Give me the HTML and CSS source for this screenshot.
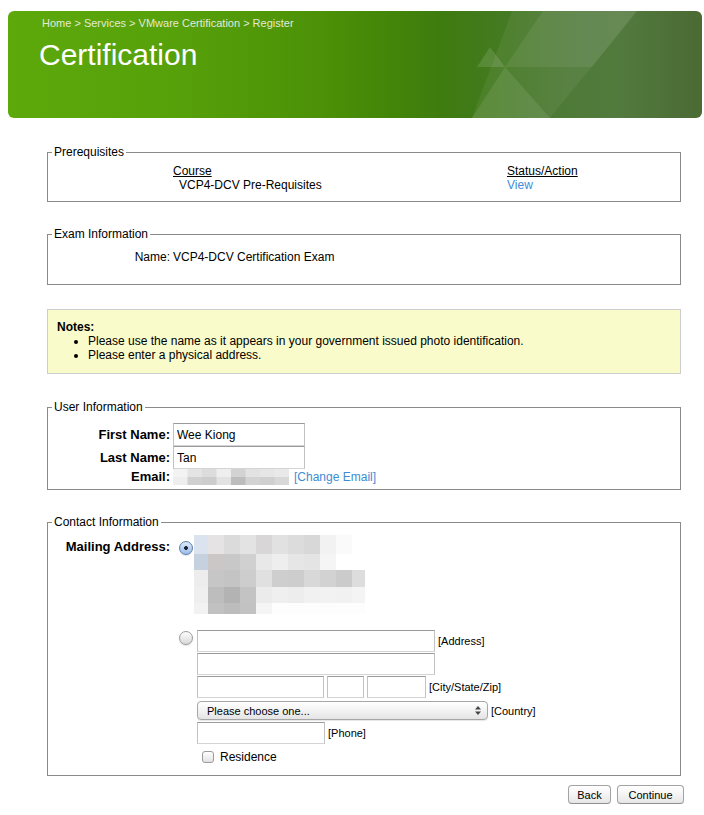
FILE: index.html
```html
<!DOCTYPE html>
<html lang="en">
<head>
    <meta charset="UTF-8">
    <meta name="viewport" content="width=device-width, initial-scale=1.0">
    <title>Certification - Register</title>
    <link rel="stylesheet" href="styles.css">
</head>
<body>

<div class="banner">
    <svg class="facets" width="694" height="107" viewBox="0 0 694 107">
        <polygon points="504,0 629,0 542,107 464,107" fill="#fff" fill-opacity="0.06"/>
        <polygon points="535,0 629,0 584,56 497,56" fill="#fff" fill-opacity="0.07"/>
        <polygon points="482,36 469,56 497,56" fill="#fff" fill-opacity="0.12"/>
        <polygon points="464,107 497,56 542,107" fill="#fff" fill-opacity="0.09"/>
    </svg>
    <div class="banner-text">
        <div class="crumbs">Home &gt; Services &gt; VMware Certification &gt; Register</div>
        <h1>Certification</h1>
    </div>
</div>

<div class="content">

    <fieldset class="box prereq">
        <legend>Prerequisites</legend>
        <div class="cols cols-3">
            <span></span><span class="th">Course</span><span class="th">Status/Action</span>
            <span></span><span class="course">VCP4-DCV Pre-Requisites</span><a href="#">View</a>
        </div>
    </fieldset>

    <fieldset class="box exam">
        <legend>Exam Information</legend>
        <div class="cols">
            <span class="plain-label">Name:</span><span>VCP4-DCV Certification Exam</span>
        </div>
    </fieldset>

    <div class="notes">
        <strong>Notes:</strong>
        <ul>
            <li>Please use the name as it appears in your government issued photo identification.</li>
            <li>Please enter a physical address.</li>
        </ul>
    </div>

    <fieldset class="box user">
        <legend>User Information</legend>
        <div class="cols user-rows">
            <label class="label" for="firstName">First Name:</label>
            <div><input class="text name" type="text" id="firstName" value="Wee Kiong"></div>

            <label class="label" for="lastName">Last Name:</label>
            <div><input class="text name" type="text" id="lastName" value="Tan"></div>

            <span class="label">Email:</span>
            <div class="email">
                <svg class="mosaic" width="116" height="16" viewBox="0 0 116 16">
                    <rect x="0" y="0" width="15" height="8" fill="#f3f3f3"/>
                    <rect x="14.5" y="0" width="15" height="8" fill="#e4e4e4"/>
                    <rect x="29" y="0" width="15" height="8" fill="#dcdcdc"/>
                    <rect x="43.5" y="0" width="15" height="8" fill="#eeeeee"/>
                    <rect x="58" y="0" width="15" height="8" fill="#d2d2d2"/>
                    <rect x="72.5" y="0" width="15" height="8" fill="#e2e2e2"/>
                    <rect x="87" y="0" width="15" height="8" fill="#e6e6e6"/>
                    <rect x="101.5" y="0" width="14.5" height="8" fill="#e9e9e9"/>
                    <rect x="0" y="8" width="15" height="8" fill="#eeeeee"/>
                    <rect x="14.5" y="8" width="15" height="8" fill="#d0d0d0"/>
                    <rect x="29" y="8" width="15" height="8" fill="#cdcdcd"/>
                    <rect x="43.5" y="8" width="15" height="8" fill="#e2e2e2"/>
                    <rect x="58" y="8" width="15" height="8" fill="#bdbdbd"/>
                    <rect x="72.5" y="8" width="15" height="8" fill="#d3d3d3"/>
                    <rect x="87" y="8" width="15" height="8" fill="#d0d0d0"/>
                    <rect x="101.5" y="8" width="14.5" height="8" fill="#d8d8d8"/>
                </svg>
                <a href="#">[Change Email]</a>
            </div>
        </div>
    </fieldset>

    <fieldset class="box contact">
        <legend>Contact Information</legend>
        <div class="cols contact-rows">
            <span class="label mail-label">Mailing Address:</span>
            <div>
                <div class="option first">
                    <input class="radio" type="radio" name="addr" checked>
                    <svg class="mosaic" width="171" height="79" viewBox="0 0 171 79">
                        <!-- row 1 -->
                        <rect x="0" y="0" width="14" height="19" fill="#dbe3ee"/>
                        <rect x="14" y="0" width="16" height="19" fill="#e5e3e3"/>
                        <rect x="30" y="0" width="16" height="19" fill="#dcdbdb"/>
                        <rect x="46" y="0" width="16" height="19" fill="#e3e3e3"/>
                        <rect x="62" y="0" width="16" height="19" fill="#d8d6d7"/>
                        <rect x="78" y="0" width="16" height="19" fill="#e2e1e1"/>
                        <rect x="94" y="0" width="16" height="19" fill="#dcdcdc"/>
                        <rect x="110" y="0" width="16" height="19" fill="#d8d8d9"/>
                        <rect x="126" y="0" width="16" height="19" fill="#f2f2f2"/>
                        <rect x="142" y="0" width="16" height="19" fill="#fafafa"/>
                        <rect x="158" y="0" width="13" height="19" fill="#ffffff"/>
                        <!-- row 2 -->
                        <rect x="0" y="19" width="14" height="16" fill="#c6d1df"/>
                        <rect x="14" y="19" width="16" height="16" fill="#cbc7c7"/>
                        <rect x="30" y="19" width="16" height="16" fill="#c8c8c8"/>
                        <rect x="46" y="19" width="16" height="16" fill="#d0d0d0"/>
                        <rect x="62" y="19" width="16" height="16" fill="#e8e8e8"/>
                        <rect x="78" y="19" width="16" height="16" fill="#eeeeee"/>
                        <rect x="94" y="19" width="16" height="16" fill="#e6e6e6"/>
                        <rect x="110" y="19" width="16" height="16" fill="#e4e4e4"/>
                        <rect x="126" y="19" width="16" height="16" fill="#f5f5f5"/>
                        <rect x="142" y="19" width="29" height="16" fill="#ffffff"/>
                        <!-- row 3 -->
                        <rect x="0" y="35" width="14" height="17" fill="#ededed"/>
                        <rect x="14" y="35" width="16" height="17" fill="#c6c6c6"/>
                        <rect x="30" y="35" width="16" height="17" fill="#c4c4c4"/>
                        <rect x="46" y="35" width="16" height="17" fill="#cdcdcd"/>
                        <rect x="62" y="35" width="16" height="17" fill="#e0e0e0"/>
                        <rect x="78" y="35" width="16" height="17" fill="#cecece"/>
                        <rect x="94" y="35" width="16" height="17" fill="#cdcdcd"/>
                        <rect x="110" y="35" width="16" height="17" fill="#d8d8d8"/>
                        <rect x="126" y="35" width="16" height="17" fill="#d2d2d2"/>
                        <rect x="142" y="35" width="16" height="17" fill="#cbcbcb"/>
                        <rect x="158" y="35" width="13" height="17" fill="#dddddd"/>
                        <!-- row 4 -->
                        <rect x="0" y="52" width="14" height="16" fill="#efefef"/>
                        <rect x="14" y="52" width="16" height="16" fill="#bdbdbd"/>
                        <rect x="30" y="52" width="16" height="16" fill="#b3b3b3"/>
                        <rect x="46" y="52" width="16" height="16" fill="#c3c3c3"/>
                        <rect x="62" y="52" width="16" height="16" fill="#ebebeb"/>
                        <rect x="78" y="52" width="16" height="16" fill="#efefef"/>
                        <rect x="94" y="52" width="16" height="16" fill="#ededed"/>
                        <rect x="110" y="52" width="16" height="16" fill="#f1f1f1"/>
                        <rect x="126" y="52" width="16" height="16" fill="#f2f2f2"/>
                        <rect x="142" y="52" width="16" height="16" fill="#f1f1f1"/>
                        <rect x="158" y="52" width="13" height="16" fill="#f4f4f4"/>
                        <!-- row 5 -->
                        <rect x="0" y="68" width="14" height="11" fill="#f2f2f2"/>
                        <rect x="14" y="68" width="16" height="11" fill="#c1c1c1"/>
                        <rect x="30" y="68" width="16" height="11" fill="#bcbcbc"/>
                        <rect x="46" y="68" width="16" height="11" fill="#c2c2c2"/>
                        <rect x="62" y="68" width="16" height="11" fill="#f5f5f5"/>
                        <rect x="78" y="68" width="93" height="11" fill="#fdfdfd"/>
                    </svg>
                </div>

                <div class="option second">
                    <input class="radio" type="radio" name="addr">
                    <div class="fields">
                        <div class="row">
                            <input class="text addr" type="text"><span class="hint">[Address]</span>
                        </div>
                        <div class="row">
                            <input class="text addr" type="text">
                        </div>
                        <div class="row city-row">
                            <input class="text city" type="text">
                            <input class="text state" type="text">
                            <input class="text zip" type="text">
                            <span class="hint">[City/State/Zip]</span>
                        </div>
                        <div class="row select-row">
                            <span class="select-wrap">
                                <select class="country">
                                    <option>Please choose one...</option>
                                </select>
                                <svg class="arrows" width="6" height="9" viewBox="0 0 6 9">
                                    <polygon points="0,3.5 3,0 6,3.5" fill="#444"/>
                                    <polygon points="0,5.5 3,9 6,5.5" fill="#444"/>
                                </svg>
                            </span>
                            <span class="hint">[Country]</span>
                        </div>
                        <div class="row phone-row">
                            <input class="text phone" type="text"><span class="hint">[Phone]</span>
                        </div>
                        <label class="residence">
                            <input class="check" type="checkbox"> Residence
                        </label>
                    </div>
                </div>
            </div>
        </div>
    </fieldset>

    <div class="actions">
        <button class="btn back" type="button">Back</button>
        <button class="btn next" type="button">Continue</button>
    </div>

</div>

</body>
</html>
```

FILE: styles.css
```css
body {
    margin: 0;
    font-family: "Liberation Sans", Arial, Helvetica, sans-serif;
    font-size: 12px;
    color: #000;
    background-color: #fff;
}

a {
    color: #3d8dd5;
    text-decoration: none;
}

/* header banner */

.banner {
    position: relative;
    height: 107px;
    margin: 11px 2px 0 8px;
    border-radius: 6px;
    overflow: hidden;
    color: #fff;
    background: linear-gradient(to right,
        #5da90b 0%,
        #56a00a 25%,
        #4c9107 45%,
        #438509 55%,
        #3e7b10 63%,
        #437a1f 70%,
        #4e7a37 80%,
        #527a3e 88%,
        #4b6a34 100%);
}

.facets {
    position: absolute;
    top: 0;
    left: 0;
}

.banner-text {
    position: relative;
}

.crumbs {
    padding: 6px 0 0 34px;
    font-size: 11px;
    line-height: 13px;
    color: #e2ead8;
}

.banner h1 {
    margin: 8px 0 0 31px;
    font-size: 30px;
    line-height: 34px;
    font-weight: normal;
}

/* page body */

.content {
    width: 634px;
    margin: 27px 0 0 47px;
}

.box {
    margin: 0 0 25px;
    padding: 0 4px;
    border: 1px solid #8a8a8a;
    min-width: 0;
}

.box legend {
    padding: 0 2px;
    font-size: 12px;
    line-height: 14px;
}

.cols {
    display: grid;
    grid-template-columns: 118px 1fr;
    column-gap: 3px;
    line-height: 14px;
}

.cols-3 {
    grid-template-columns: 118px 331px 1fr;
}

.prereq .cols {
    margin-top: 5px;
    padding-bottom: 9px;
}

.th {
    text-decoration: underline;
}

.course {
    padding-left: 6px;
}

.exam {
    margin-bottom: 24px;
}

.exam .cols {
    margin-top: 9px;
    padding-bottom: 20px;
}

.plain-label {
    text-align: right;
}

.notes {
    margin-bottom: 26px;
    padding: 10px 9px 11px;
    line-height: 14px;
    background-color: #f9fbcb;
    border: 1px solid #cdcdcd;
}

.notes ul {
    margin: 0;
    padding-left: 31px;
}

.label {
    text-align: right;
    font-size: 13px;
    font-weight: bold;
}

.user-rows {
    margin-top: 9px;
    padding-bottom: 5px;
    grid-template-rows: 23px 23px 15px;
    align-items: center;
}

.user-rows div {
    display: flex;
    align-items: center;
}

.text {
    box-sizing: border-box;
    height: 22px;
    margin: 0;
    padding: 0 3px;
    font-family: "Liberation Sans", Arial, Helvetica, sans-serif;
    font-size: 12px;
    color: #000;
    background-color: #fff;
    border: 1px solid;
    border-color: #9a9a9a #c2c2c2 #d4d4d4;
    border-radius: 0;
    outline: none;
}

.name {
    width: 132px;
    height: 23px;
}

.email .mosaic {
    display: block;
}

.email a {
    margin-left: 5px;
}

/* contact block */

.contact {
    margin-bottom: 0;
}

.contact-rows {
    margin-top: 6px;
    padding-bottom: 10px;
    align-items: start;
}

.mail-label {
    padding-top: 4px;
    line-height: 15px;
}

.option {
    display: flex;
    align-items: flex-start;
}

.first .radio {
    margin: 6px 1px 0 6px;
}

.first .mosaic {
    display: block;
}

.second {
    margin-top: 16px;
}

.second .radio {
    margin: 1px 4px 0 6px;
}

.radio {
    -webkit-appearance: none;
    appearance: none;
    flex: none;
    box-sizing: border-box;
    width: 14px;
    height: 14px;
    border-radius: 50%;
    border: 1px solid #9b9b9b;
    background: linear-gradient(#fdfdfd, #d9d9d9);
    box-shadow: 0 1px 1px rgba(0, 0, 0, 0.12);
}

.radio:checked {
    border-color: #5d7fae;
    background:
        radial-gradient(circle, #1c2636 0, #1c2636 1.6px, transparent 2.2px),
        linear-gradient(#dbe8f9, #9bbde9);
}

.fields .row {
    display: flex;
    align-items: center;
    gap: 3px;
    margin-bottom: 1px;
}

.hint {
    font-size: 11px;
}

.addr {
    width: 238px;
}

.city {
    width: 127px;
}

.state {
    width: 37px;
}

.zip {
    width: 59px;
}

.city-row {
    margin-bottom: 3px !important;
}

.select-row {
    margin-bottom: 2px !important;
}

.select-wrap {
    position: relative;
    display: inline-block;
}

.country {
    -webkit-appearance: none;
    appearance: none;
    display: block;
    box-sizing: border-box;
    width: 291px;
    height: 19px;
    margin: 0;
    padding: 0 0 0 9px;
    font-family: "Liberation Sans", Arial, Helvetica, sans-serif;
    font-size: 11px;
    color: #000;
    border: 1px solid #a6a6a6;
    border-radius: 4px;
    background: linear-gradient(#ffffff, #f3f3f3 50%, #e4e4e4);
    box-shadow: 0 1px 1px rgba(0, 0, 0, 0.1);
}

.arrows {
    position: absolute;
    top: 5px;
    right: 7px;
    pointer-events: none;
}

.phone {
    width: 128px;
}

.phone-row {
    margin-bottom: 5px !important;
}

.residence {
    display: flex;
    align-items: center;
    height: 16px;
    margin-left: 5px;
    gap: 6px;
}

.check {
    -webkit-appearance: none;
    appearance: none;
    box-sizing: border-box;
    width: 12px;
    height: 12px;
    margin: 0;
    border: 1px solid #9b9b9b;
    border-radius: 3px;
    background: linear-gradient(#ffffff, #e2e2e2);
}

/* buttons */

.actions {
    display: flex;
    justify-content: flex-end;
    gap: 6px;
    margin: 9px -3px 0 0;
}

.btn {
    box-sizing: border-box;
    height: 19px;
    padding: 0;
    font-family: "Liberation Sans", Arial, Helvetica, sans-serif;
    font-size: 11px;
    color: #000;
    border: 1px solid #a3a3a3;
    border-bottom-color: #8f8f8f;
    border-radius: 4px;
    background: linear-gradient(#ffffff, #f4f4f4 50%, #e6e6e6);
    box-shadow: 0 1px 1px rgba(0, 0, 0, 0.1);
}

.back {
    width: 43px;
}

.next {
    width: 67px;
}
```
